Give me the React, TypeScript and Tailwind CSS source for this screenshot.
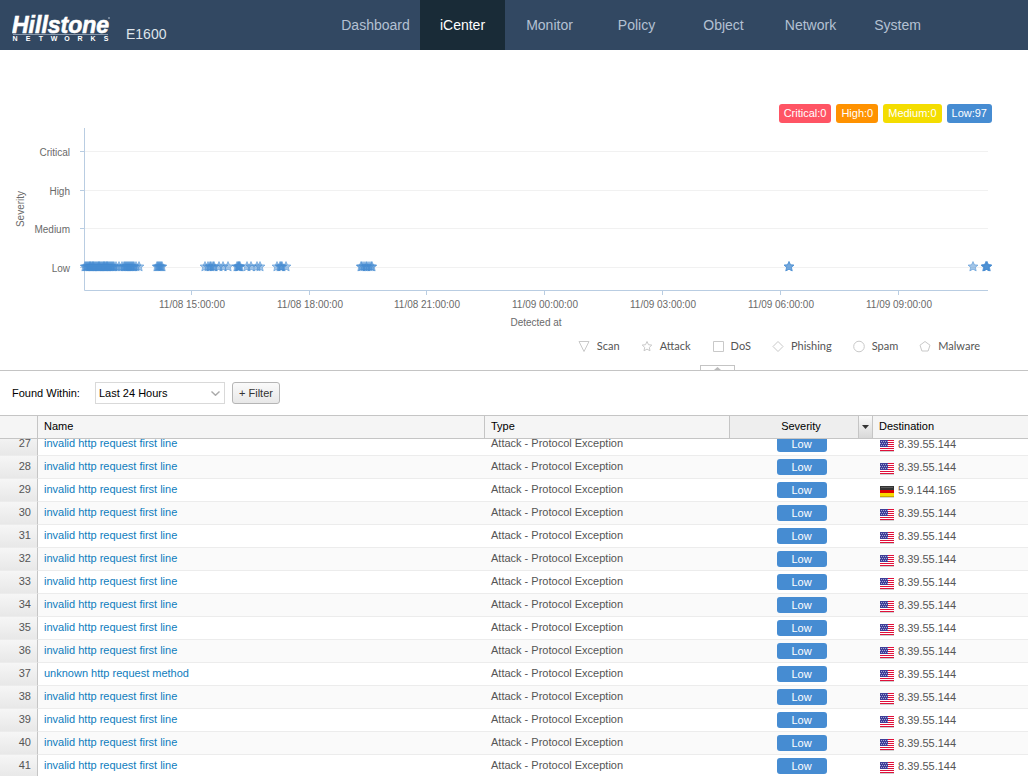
import React from "react";

const NAV = [
  { label: "Dashboard", width: "w-[89px]" },
  { label: "iCenter", width: "w-[85px]" },
  { label: "Monitor", width: "w-[89px]" },
  { label: "Policy", width: "w-[85px]" },
  { label: "Object", width: "w-[89px]" },
  { label: "Network", width: "w-[85px]" },
  { label: "System", width: "w-[89px]" },
];

const TOTALS = [
  { label: "Critical:0", color: "bg-[#ff5464]" },
  { label: "High:0", color: "bg-[#ff9200]" },
  { label: "Medium:0", color: "bg-[#f4dd00]" },
  { label: "Low:97", color: "bg-[#468cd2]" },
];

const LEVELS = [
  { label: "Critical", y: 151 },
  { label: "High", y: 190 },
  { label: "Medium", y: 228 },
  { label: "Low", y: 267 },
];

const TICKS = [
  { label: "11/08 15:00:00", x: 192 },
  { label: "11/08 18:00:00", x: 310 },
  { label: "11/08 21:00:00", x: 427 },
  { label: "11/09 00:00:00", x: 545 },
  { label: "11/09 03:00:00", x: 663 },
  { label: "11/09 06:00:00", x: 781 },
  { label: "11/09 09:00:00", x: 899 },
];

const EVENTS = [
  85, 86, 87, 88, 89, 90, 90, 91, 92, 93, 93, 94, 95, 96, 97, 98, 99, 99, 100, 101, 102, 103, 104, 104, 105, 106, 107,
  107, 108, 109, 110, 111, 112, 113, 114, 116, 119, 122, 124, 125, 126, 127, 128, 129, 130, 131, 132, 133, 134, 136, 139,
  157, 158, 159, 160, 161, 162, 205, 208, 210, 211, 213, 214, 219, 223, 228, 237, 238, 239, 239, 240, 247, 251, 257, 260,
  277, 280, 281, 282, 286, 361, 362, 364, 366, 367, 369, 371, 372, 789, 789, 973, 986, 986, 987, 987,
];

const STAR = "M0,-5 L1.5,-1.7 L5,-1.4 L2.4,0.9 L3.2,4.4 L0,2.7 L-3.2,4.4 L-2.4,0.9 L-5,-1.4 L-1.5,-1.7 Z";

const LEGEND = [
  { label: "Scan", d: "M1,1.5 H11 L6,11.5 Z" },
  { label: "Attack", d: "M6,1.5 L7.5,4.7 L10.8,5.1 L8.3,7.4 L9,10.8 L6,9.1 L3,10.8 L3.7,7.4 L1.2,5.1 L4.5,4.7 Z" },
  { label: "DoS", d: "M1.5,1.5 H11.5 V11.5 H1.5 Z" },
  { label: "Phishing", d: "M6,1.5 L11,6.5 L6,11.5 L1,6.5 Z" },
  { label: "Spam", d: "M6,1.2 A5.3,5.3 0 1 1 6,11.8 A5.3,5.3 0 1 1 6,1.2 Z" },
  { label: "Malware", d: "M6,1.5 L11,5.2 L9.1,11 H2.9 L1,5.2 Z" },
];

const ROWS = Array.from({ length: 15 }, (_, i) => {
  const id = 27 + i;
  return {
    id,
    name: id === 37 ? "unknown http request method" : "invalid http request first line",
    country: id === 29 ? "de" : "us",
    ip: id === 29 ? "5.9.144.165" : "8.39.55.144",
  };
});

function Logo() {
  return (
    <svg className="block h-8 w-[100px]" viewBox="0 0 100 32" role="img" aria-label="Hillstone Networks">
      <text x="0" y="21" stroke="#fff" strokeWidth="0.6" className="fill-white font-['Liberation_Sans',sans-serif] text-[23px] font-bold italic">
        Hillstone
      </text>
      <circle cx="97" cy="6" r="1" className="fill-[#8797ab]" />
      <rect x="1" y="22" width="95" height="1" className="fill-[#8797ab]" />
      {"NETWORKS".split("").map((c, i) => (
        <text key={i} x={3 + i * 13} y="29" textAnchor="middle" className="fill-white font-['Liberation_Sans',sans-serif] text-[7px] font-bold">
          {c}
        </text>
      ))}
    </svg>
  );
}

function Flag({ country }: { country: string }) {
  if (country === "de") {
    return (
      <svg className="h-3 w-4 shrink-0" viewBox="0 0 16 12" role="img" aria-label="Germany">
        <rect x="1" y="0" width="14" height="4" fill="#333" />
        <path d="M2,1.5 H14" stroke="#5a5a5a" />
        <rect x="1" y="4" width="14" height="3" fill="#dd0000" />
        <rect x="1" y="7" width="14" height="4" fill="#f8da00" />
        <path d="M1,10.5 H15" stroke="#c9a800" />
        <path d="M1,11.5 H15" stroke="#d5d5d5" />
      </svg>
    );
  }
  return (
    <svg className="h-3 w-4 shrink-0" viewBox="0 0 16 12" role="img" aria-label="United States" shapeRendering="crispEdges">
      <rect x="1" y="0" width="14" height="11" fill="#fff" />
      <path d="M1,0.5 H15 M1,2.5 H15 M1,4.5 H15 M1,6.5 H15 M1,8.5 H15 M1,10.5 H15" stroke="#e0103a" />
      <rect x="1" y="0" width="8" height="7" fill="#3f3f98" />
      <path d="M2,1.5 H9 M1,3.5 H9 M2,5.5 H9" stroke="#a5a5d6" strokeDasharray="1 1" />
      <path d="M1,11.5 H15" stroke="#cfcfcf" />
    </svg>
  );
}

function SeverityChart() {
  return (
    <svg className="block w-full" viewBox="0 123 1028 209" role="img" aria-label="Severity by detection time">
      <g className="fill-[#6a6a6a] font-['Liberation_Sans',sans-serif] text-[10px]">
        {LEVELS.map((l) => (
          <g key={l.label}>
            <path d={`M85,${l.y + 0.5} H988`} stroke="#f1f1f1" />
            <path d={`M80,${l.y + 0.5} H85`} stroke="#b9cde2" />
            <text x="70" y={l.y + 5} textAnchor="end">{l.label}</text>
          </g>
        ))}
        {TICKS.map((t) => (
          <g key={t.x}>
            <path d={`M${t.x - 0.5},290 V295`} stroke="#b9cde2" />
            <text x={t.x} y="308" textAnchor="middle">{t.label}</text>
          </g>
        ))}
        <path d="M84.5,128 V290.5 H988" fill="none" stroke="#b9cde2" />
        <text x="536" y="326" textAnchor="middle">Detected at</text>
        <text transform="translate(24 209) rotate(-90)" textAnchor="middle">Severity</text>
      </g>
      {EVENTS.map((x, i) => (
        <path key={i} d={STAR} transform={`translate(${x} 266.5)`} fill="#468cd2" fillOpacity="0.5" stroke="#468cd2" strokeOpacity="0.5" />
      ))}
    </svg>
  );
}

function Columns() {
  return (
    <colgroup>
      <col className="w-[38px]" />
      <col className="w-[447px]" />
      <col className="w-[245px]" />
      <col className="w-[143px]" />
      <col />
    </colgroup>
  );
}

export default function App() {
  return (
    <div className="flex h-screen flex-col overflow-hidden bg-white font-['Liberation_Sans',Arial,sans-serif] text-[11px] text-[#555]">
      <header className="flex h-[50px] shrink-0 bg-[#324862]">
        <div className="flex w-[331px] shrink-0 gap-3.5 pt-3 pl-3">
          <Logo />
          <span className="pt-3 text-sm leading-5 text-[#dfe4ea]">E1600</span>
        </div>
        <nav className="flex text-sm">
          {NAV.map((n) => (
            <a
              key={n.label}
              href="#"
              aria-current={n.label === "iCenter" ? "page" : undefined}
              className={`flex items-center justify-center ${n.width} ${n.label === "iCenter" ? "bg-[#192b37] text-white" : "text-[#b4c1d3]"}`}
            >
              {n.label}
            </a>
          ))}
        </nav>
      </header>

      <section className="flex shrink-0 flex-col border-b border-[#c4c4c4]">
        <div className="flex justify-end gap-[5px] pt-[54px] pr-9">
          {TOTALS.map((t) => (
            <span key={t.label} className={`rounded-[3px] px-[5px] leading-[19px] text-white ${t.color}`}>{t.label}</span>
          ))}
        </div>
        <SeverityChart />
        <ul className="flex h-[33px] justify-end gap-[21px] pt-1.5 pr-12 font-['Lato',sans-serif] text-[11px] text-[#555]">
          {LEGEND.map((l) => (
            <li key={l.label} className="flex h-4 items-center gap-1.5">
              <svg className="size-[13px]" viewBox="0 0 13 13" fill="none" stroke="#c9c9c9" aria-hidden="true">
                <path d={l.d} />
              </svg>
              {l.label}
            </li>
          ))}
        </ul>
        <button aria-label="Collapse chart" className="mr-[293px] flex h-[5px] w-[35px] items-end justify-center self-end border border-b-0 border-[#c4c4c4]">
          <svg className="h-[3px] w-[7px]" viewBox="0 0 7 3" aria-hidden="true">
            <path d="M3.5,0 L7,3 H0 Z" fill="#bbb" />
          </svg>
        </button>
      </section>

      <form className="flex h-11 shrink-0 items-center pl-3 text-black">
        <label htmlFor="range" className="w-[83px]">Found Within:</label>
        <span className="relative flex items-center">
          <select id="range" className="h-[22px] w-[130px] appearance-none border border-[#d9d9d9] bg-white pl-[3px]">
            <option>Last 24 Hours</option>
          </select>
          <svg className="pointer-events-none absolute right-[5px] h-[5px] w-[9px]" viewBox="0 0 9 5" fill="none" stroke="#aaa" strokeWidth="1.4" aria-hidden="true">
            <path d="M0.5,0.5 L4.5,4.3 L8.5,0.5" />
          </svg>
        </span>
        <button type="button" className="ml-[7px] h-[22px] w-12 rounded-[3px] border border-[#b5b5b5] bg-linear-to-b from-[#fafafa] to-[#e8e8e8] text-[#333]">+ Filter</button>
      </form>

      <table className="w-full shrink-0 table-fixed border-separate border-spacing-0 border-y border-[#c5c5c5] bg-[#f5f5f5] text-black">
        <Columns />
        <thead>
          <tr className="h-[22px] text-left">
            <th className="border-r border-[#c5c5c5]" aria-label="Row" />
            <th className="border-r border-[#c5c5c5] px-1.5 pb-0.5 font-normal">Name</th>
            <th className="border-r border-[#c5c5c5] px-1.5 pb-0.5 font-normal">Type</th>
            <th className="border-r border-[#c5c5c5] bg-[#eee] p-0 font-normal">
              <div className="flex h-[22px] items-center">
                <span className="flex-1 pb-0.5 pl-3.5 text-center">Severity</span>
                <button aria-label="Severity menu" className="flex h-full w-3.5 items-center justify-center border-l border-[#c5c5c5] bg-linear-to-b from-[#fafafa] to-[#d8d8d8]">
                  <svg className="h-1 w-[7px]" viewBox="0 0 7 4" aria-hidden="true">
                    <path d="M0,0 H7 L3.5,4 Z" fill="#333" />
                  </svg>
                </button>
              </div>
            </th>
            <th className="px-1.5 pb-0.5 font-normal">Destination</th>
          </tr>
        </thead>
      </table>

      <div className="min-h-0 flex-1 overflow-hidden">
        <table className="-mt-1.5 w-full table-fixed border-separate border-spacing-0 leading-4">
          <Columns />
          <tbody>
            {ROWS.map((r) => (
              <tr key={r.id} className={`h-[23px] align-top *:border-b *:border-b-[#ececec] ${r.id % 2 ? "bg-white" : "bg-[#fafafa]"}`}>
                <td className="border-r border-r-[#c5c5c5] bg-linear-to-b from-[#f6f6f6] to-[#e8e8e8] pt-0.5 pr-1.5 text-right">{r.id}</td>
                <td className="px-1.5 pt-0.5">
                  <a href="#" className="text-[#0e7cbd]">{r.name}</a>
                </td>
                <td className="px-1.5 pt-0.5">Attack - Protocol Exception</td>
                <td className="p-0 pt-[3px] text-center">
                  <span className="mx-auto block w-[50px] rounded-[3px] bg-[#468cd2] text-white">Low</span>
                </td>
                <td className="px-1.5 pt-[3px]">
                  <span className="flex items-end gap-[3px]">
                    <Flag country={r.country} />
                    {r.ip}
                  </span>
                </td>
              </tr>
            ))}
          </tbody>
        </table>
      </div>
    </div>
  );
}
